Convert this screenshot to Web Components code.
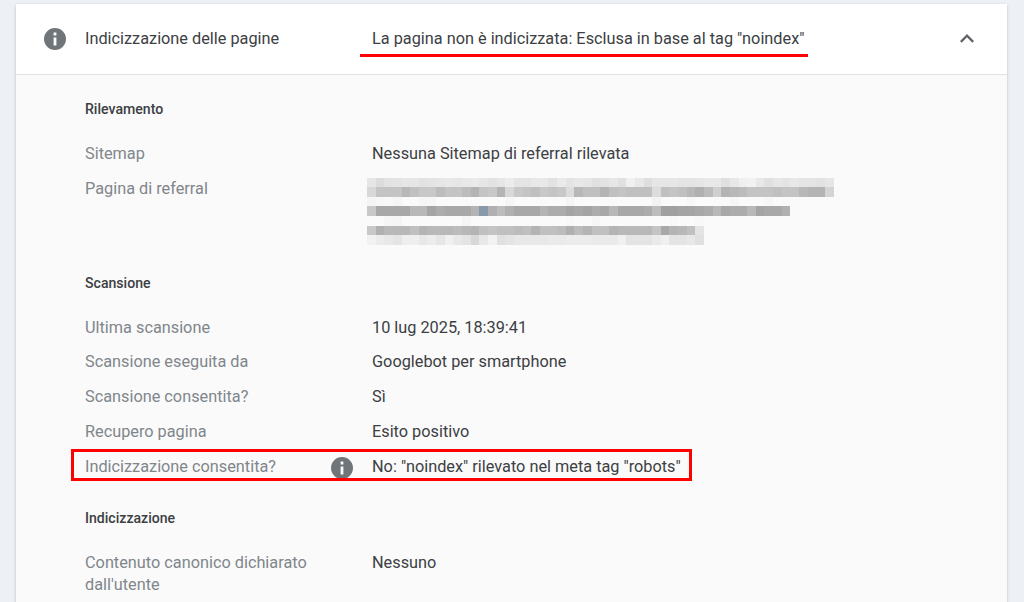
<!DOCTYPE html>
<html lang="it">
<head>
<meta charset="utf-8">
<title>Indicizzazione delle pagine</title>
<style>
  html, body { margin: 0; height: 602px; overflow: hidden; background: #edf1f6; }
  body { font-family: Roboto, "Liberation Sans", sans-serif; padding: 4px 17px 0 16px; box-sizing: border-box; }
</style>
</head>
<body>
<template id="info-icon-tpl">
  <style>
    :host { display: inline-flex; width: 24px; height: 24px; }
    svg { width: 100%; height: 100%; fill: #70757a; }
  </style>
  <svg viewBox="0 0 24 24"><path fill-rule="evenodd" d="M12 1a11 11 0 1 0 0 22 11 11 0 0 0 0-22zm-1.4 4.6h2.8v2.9h-2.8zm0 4.9h2.8v8h-2.8z"/></svg>
</template>

<template id="report-card-tpl">
  <style>
    :host {
      display: block;
      background: #fafafa;
      height: 640px;
      box-shadow: 0 1px 3px rgba(60,64,67,.3);
      border-radius: 2px 2px 0 0;
    }
  </style>
  <slot></slot>
</template>

<template id="card-header-tpl">
  <style>
    :host {
      display: flex;
      align-items: center;
      position: relative;
      height: 71px;
      box-sizing: border-box;
      background: #fff;
      border-bottom: 1px solid #e2e3e4;
      padding: 0 26px 2px 27px;
      color: #3c4043;
      font-size: 16.3px;
    }
    info-icon { margin-top: 2px; }
    .title { margin-left: 18px; width: 287px; }
    .status { flex: 1; }
    svg { width: 28px; height: 28px; fill: #5f6368; display: block; }
    .mark {
      position: absolute; left: 344px; top: 50px;
      width: 448px; height: 3px; background: #ff0000;
    }
  </style>
  <info-icon></info-icon>
  <span class="title"><slot name="title"></slot></span>
  <span class="status"><slot name="status"></slot></span>
  <svg viewBox="0 0 24 24"><path d="M12 8.6l-6 6 1.4 1.4 4.6-4.6 4.6 4.6 1.4-1.4z"/></svg>
  <span class="mark"></span>
</template>

<template id="card-section-tpl">
  <style>
    :host { display: block; padding: 0 69px; }
    h3 {
      margin: 0;
      font-size: 14.1px;
      line-height: 20px;
      font-weight: 500;
      color: #3c4043;
    }
    .rows { display: flex; flex-direction: column; margin-top: 18px; }
  </style>
  <h3><slot name="heading"></slot></h3>
  <div class="rows"><slot></slot></div>
</template>

<template id="data-row-tpl">
  <style>
    :host {
      display: grid;
      grid-template-columns: 287px 1fr;
      position: relative;
      font-size: 16.3px;
      line-height: 21.7px;
      padding: 6px 0 7px;
    }
    .label { color: #80868b; position: relative; padding-right: 60px; }
    .value { color: #3c4043; }
    info-icon { position: absolute; right: 18px; top: 0; }
    :host([flagged])::after {
      content: "";
      position: absolute;
      left: -14px; top: -1px;
      width: 621px; height: 32px;
      box-sizing: border-box;
      border: 3px solid #ff0000;
    }
  </style>
  <div class="label"><slot name="label"></slot></div>
  <div class="value"><slot></slot></div>
</template>

<template id="blurred-text-tpl">
  <style>
    :host { display: block; margin: 0 0 0 -5px; width: 468px; }
    .band { display: flex; height: 9.6px; }
    .band i { display: block; width: 8.65px; flex: none; }
  </style>
  <div id="bands"></div>
</template>

<report-card>
  <card-header>
    <span slot="title">Indicizzazione delle pagine</span>
    <span slot="status">La pagina non è indicizzata: Esclusa in base al tag "noindex"</span>
  </card-header>

  <card-section style="padding-top:24px">
    <span slot="heading">Rilevamento</span>
    <data-row><span slot="label">Sitemap</span>Nessuna Sitemap di referral rilevata</data-row>
    <data-row style="height:93px;box-sizing:border-box"><span slot="label">Pagina di referral</span><blurred-text></blurred-text></data-row>
  </card-section>

  <card-section style="padding-top:8px">
    <span slot="heading">Scansione</span>
    <data-row><span slot="label">Ultima scansione</span>10 lug 2025, 18:39:41</data-row>
    <data-row><span slot="label">Scansione eseguita da</span>Googlebot per smartphone</data-row>
    <data-row><span slot="label">Scansione consentita?</span>Sì</data-row>
    <data-row><span slot="label">Recupero pagina</span>Esito positivo</data-row>
    <data-row flagged info><span slot="label">Indicizzazione consentita?</span>No: "noindex" rilevato nel meta tag "robots"</data-row>
  </card-section>

  <card-section style="padding-top:24px">
    <span slot="heading">Indicizzazione</span>
    <data-row><span slot="label">Contenuto canonico dichiarato dall'utente</span>Nessuno</data-row>
  </card-section>
</report-card>

<script>
  function stamp(el, id) {
    const root = el.attachShadow({ mode: "open" });
    root.appendChild(document.getElementById(id).content.cloneNode(true));
    return root;
  }

  class InfoIcon extends HTMLElement {
    constructor() { super(); stamp(this, "info-icon-tpl"); }
  }
  class ReportCard extends HTMLElement {
    constructor() { super(); stamp(this, "report-card-tpl"); }
  }
  class CardHeader extends HTMLElement {
    constructor() { super(); stamp(this, "card-header-tpl"); }
  }
  class CardSection extends HTMLElement {
    constructor() { super(); stamp(this, "card-section-tpl"); }
  }
  class DataRow extends HTMLElement {
    constructor() { super(); this.root = stamp(this, "data-row-tpl"); }
    connectedCallback() {
      if (this.hasAttribute("info") && !this.root.querySelector("info-icon")) {
        this.root.querySelector(".label").appendChild(document.createElement("info-icon"));
      }
    }
  }

  // the pixelated url: each band is a list of grey levels, one per mosaic cell
  const BANDS = [
    "e6 dc e2 e4 e6 e6 e2 e4 e6 e8 e6 e8 ea e6 e2 e6 ec e4 e4 e8 e8 e2 ea e4 e8 e6 e0 e2 e6 e0 f0 e8 de e6 e6 e6 e4 e4 e6 e8 e8 e0 e8 f0 f2 e8 e0 e6 e4 e8 e4 e4 e2 e6",
    "d8 c4 c4 c4 b8 c0 c8 c8 bc c4 c4 bc b4 c4 c8 b4 d8 c8 c4 c0 c8 c4 c8 dc b8 c0 c0 b4 c0 c4 c0 c0 c0 dc c0 c4 c0 b8 b0 bc d0 b4 b8 bc c4 c4 c4 c0 c4 c4 b8 b4 b4 d4",
    "f4 f7 f8 f5 fa fa f6 f6 fa fa fa fa fa fa fa fa f6 fa fa fa fa fa fa f5 fa fa fa fa fa fa fa fa fa f2 fa fa fa f7 fa fa fa fa f6 fa fa fa f7 fa f9",
    "c8 a8 a8 a8 a8 b8 b8 a4 ac a8 a8 a8 b4 89a b0 bc b0 a8 a8 a8 b4 ac ac a4 a8 a4 ac a8 b8 a8 a8 a8 ac bc a0 a0 a4 a4 a8 ac b8 a8 ac ac b8 a4 a8 a8 b0",
    "fa fa f6 f5 fa fa fa fa fa fa fa f5 fa fa fa fa fa fa fa fa fa fa fa f8 fa fa f6 fa fa fa fa fa fa fa fa f8 fa fa f8",
    "c8 b0 b8 b8 b8 c0 b4 b8 b8 b8 bc b8 b4 c0 c4 c0 c0 bc c0 b4 c0 c0 bc b0 bc b4 c0 c0 b4 b8 b8 b8 b8 c4 a8 b4 b8 c0 e4",
    "f2 ec e8 e4 ee ee e8 ec e6 f0 e8 e4 d8 e8 f2 e0 e4 e8 e8 e8 e8 ea ea ec ec ec ea ea ea f0 e4 e4 e4 ea f0 e4 e4 e8 e0"
  ];

  class BlurredText extends HTMLElement {
    constructor() {
      super();
      const root = stamp(this, "blurred-text-tpl");
      const holder = root.getElementById("bands");
      for (const band of BANDS) {
        const row = document.createElement("div");
        row.className = "band";
        for (const v of band.split(" ")) {
          const cell = document.createElement("i");
          // three digits is a tinted cell, two digits a plain grey
          cell.style.background = v.length === 3 ? "#" + v : "#" + v + v + v;
          row.appendChild(cell);
        }
        holder.appendChild(row);
      }
    }
  }

  customElements.define("info-icon", InfoIcon);
  customElements.define("report-card", ReportCard);
  customElements.define("card-header", CardHeader);
  customElements.define("card-section", CardSection);
  customElements.define("data-row", DataRow);
  customElements.define("blurred-text", BlurredText);
</script>
</body>
</html>
